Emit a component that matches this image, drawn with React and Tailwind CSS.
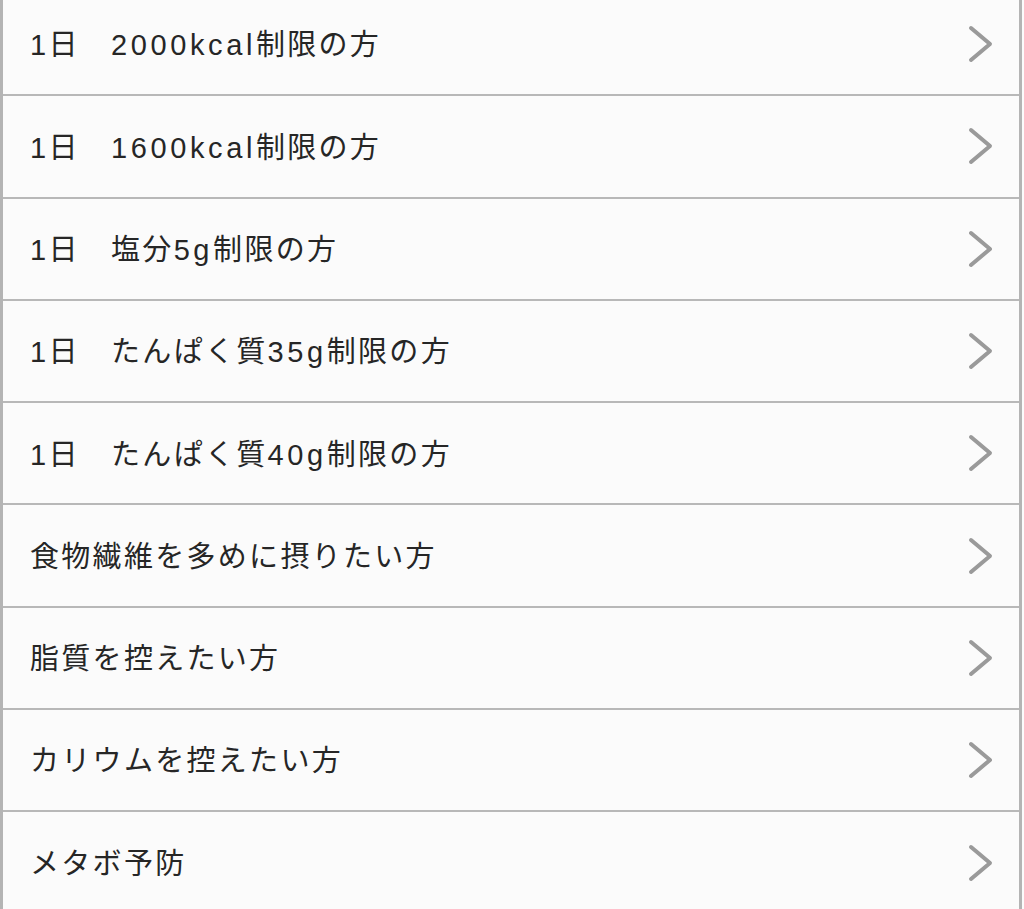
import React from 'react';

const items = [
  '1日　2000kcal制限の方',
  '1日　1600kcal制限の方',
  '1日　塩分5g制限の方',
  '1日　たんぱく質35g制限の方',
  '1日　たんぱく質40g制限の方',
  '食物繊維を多めに摂りたい方',
  '脂質を控えたい方',
  'カリウムを控えたい方',
  'メタボ予防',
];

const Chevron = () => (
  <svg width="28" height="38" viewBox="0 0 28 38" fill="none" className="shrink-0">
    <polyline
      points="4,3 23,19 4,35"
      stroke="#9a9a9a"
      strokeWidth="4"
      strokeLinecap="round"
      strokeLinejoin="round"
    />
  </svg>
);

// latin runs get a little more spacing, like the original font
const Label = ({ text }) => (
  <span className="pt-[4px] text-[29px] text-[#262626] tracking-[2.3px]">
    {text.split(/([0-9a-z]+)/).map((part, i) =>
      /^[0-9a-z]+$/.test(part) && !/^1$/.test(part) ? (
        <span key={i} className="tracking-[3.6px]">{part}</span>
      ) : (
        part
      )
    )}
  </span>
);

const App = () => {
  return (
    <div
      className="w-[1024px] h-[909px] overflow-hidden bg-[#fbfbfb]"
      style={{ fontFamily: '"Liberation Sans", "Noto Sans CJK JP", sans-serif' }}
    >
      <div className="mt-[-6px] mr-[2px] border-l-[3px] border-r-[3px] border-[#b4b4b4]">
        {items.map((label) => (
          <div
            key={label}
            className="h-[102.3px] flex items-center justify-between pl-[27px] pr-[24px] border-b-[2.5px] border-[#b8b8b8]"
          >
            <Label text={label} />
            <Chevron />
          </div>
        ))}
      </div>
    </div>
  );
};

export default App;
